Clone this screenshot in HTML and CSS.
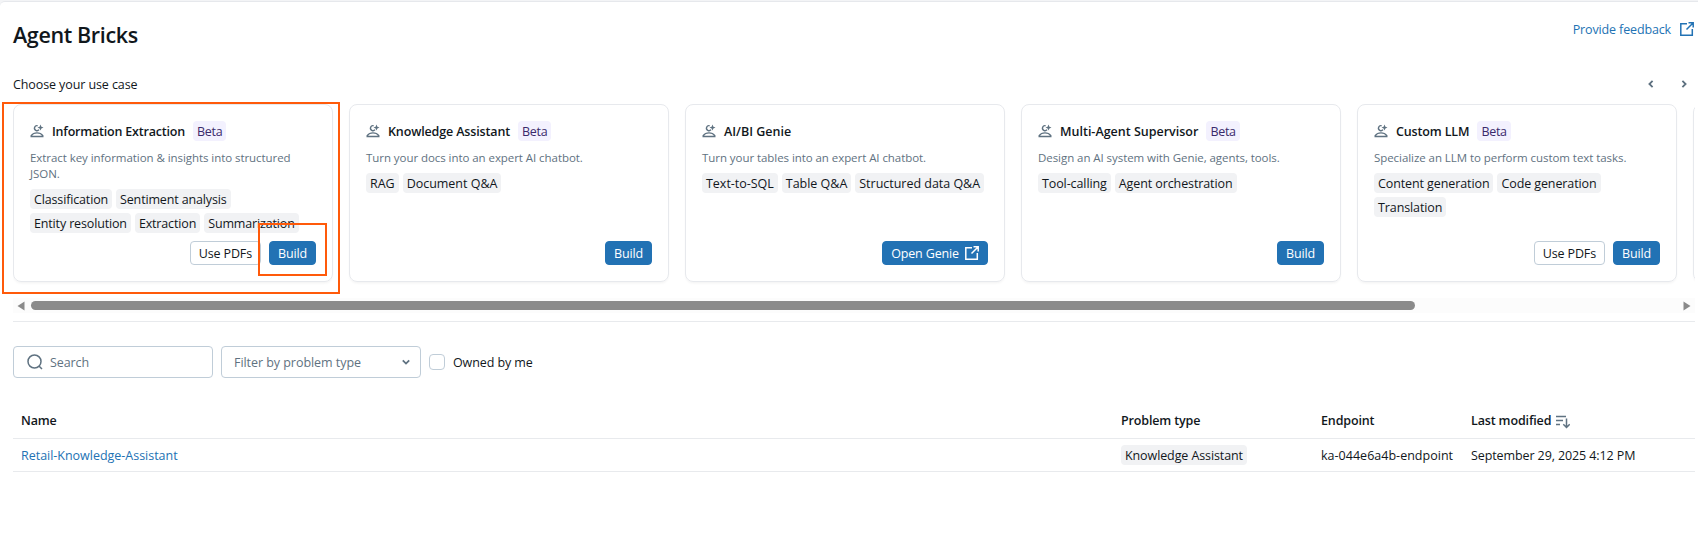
FILE: index.html
```html
<!DOCTYPE html>
<html lang="en">
<head>
<meta charset="utf-8">
<title>Agent Bricks</title>
<link rel="stylesheet" href="styles.css">
</head>
<body>
<svg width="0" height="0" class="defs">
  <symbol id="agent" viewBox="0 0 14 14">
    <path d="M7.600 1.700A2.500 2.500 0 1 0 9 5.600" fill="none" stroke="currentColor" stroke-width="1.400"/>
    <path d="M10.500.6l.9 2.100 2.100.9-2.100.9-.9 2.100-.9-2.100-2.100-.9 2.100-.9z" fill="currentColor"/>
    <path d="M1.200 12.500v-.9C2.600 9.700 4.600 8.900 7 8.900s4.400.8 5.800 2.700v.9z" fill="none" stroke="currentColor" stroke-width="1.400"/>
  </symbol>
  <symbol id="external" viewBox="0 0 14 14">
    <path d="M7 1.700H.8v11.500h11.500V7M8.500.8h4.700v4.700M13 1L6.500 7.500" fill="none" stroke="currentColor" stroke-width="1.500"/>
  </symbol>
  <symbol id="chevron" viewBox="0 0 8 8">
    <path d="M.8 2.400L4 5.600l3.200-3.200" fill="none" stroke="currentColor" stroke-width="1.800"/>
  </symbol>
</svg>
<main class="page">
  <header class="header">
    <h1 class="title">Agent Bricks</h1>
    <a class="feedback"><span>Provide feedback</span><svg class="ext"><use href="#external"/></svg></a>
  </header>

  <div class="choose">
    <span>Choose your use case</span>
    <div class="pager">
      <svg class="chev prev"><use href="#chevron"/></svg>
      <svg class="chev next"><use href="#chevron"/></svg>
    </div>
  </div>

  <section class="cards">
    <article class="card">
      <div class="card-head"><svg class="agent"><use href="#agent"/></svg><h2 class="tight">Information Extraction</h2><span class="beta">Beta</span></div>
      <p class="desc">Extract key information &amp; insights into structured JSON.</p>
      <div class="tags snug"><span class="tag">Classification</span><span class="tag">Sentiment analysis</span><span class="tag">Entity resolution</span><span class="tag">Extraction</span><span class="tag">Summarization</span></div>
      <div class="actions"><button class="btn">Use PDFs</button><button class="btn primary">Build</button></div>
    </article>
    <article class="card">
      <div class="card-head"><svg class="agent"><use href="#agent"/></svg><h2>Knowledge Assistant</h2><span class="beta">Beta</span></div>
      <p class="desc">Turn your docs into an expert AI chatbot.</p>
      <div class="tags roomy"><span class="tag">RAG</span><span class="tag">Document Q&amp;A</span></div>
      <div class="actions"><button class="btn primary">Build</button></div>
    </article>
    <article class="card">
      <div class="card-head"><svg class="agent"><use href="#agent"/></svg><h2 class="wide">AI/BI Genie</h2></div>
      <p class="desc">Turn your tables into an expert AI chatbot.</p>
      <div class="tags roomy"><span class="tag">Text-to-SQL</span><span class="tag">Table Q&amp;A</span><span class="tag">Structured data Q&amp;A</span></div>
      <div class="actions"><button class="btn primary">Open Genie<svg class="ext"><use href="#external"/></svg></button></div>
    </article>
    <article class="card">
      <div class="card-head"><svg class="agent"><use href="#agent"/></svg><h2 class="wide">Multi-Agent Supervisor</h2><span class="beta">Beta</span></div>
      <p class="desc">Design an AI system with Genie, agents, tools.</p>
      <div class="tags"><span class="tag">Tool-calling</span><span class="tag">Agent orchestration</span></div>
      <div class="actions"><button class="btn primary">Build</button></div>
    </article>
    <article class="card">
      <div class="card-head"><svg class="agent"><use href="#agent"/></svg><h2>Custom LLM</h2><span class="beta">Beta</span></div>
      <p class="desc">Specialize an LLM to perform custom text tasks.</p>
      <div class="tags"><span class="tag">Content generation</span><span class="tag">Code generation</span><span class="tag">Translation</span></div>
      <div class="actions"><button class="btn">Use PDFs</button><button class="btn primary">Build</button></div>
    </article>
    <article class="card"></article>
  </section>

  <div class="scrollbar">
    <svg class="arrow" viewBox="0 0 8 10"><path d="M7.500.5v9L.5 5z" fill="#8a8a8a"/></svg>
    <div class="track"><div class="thumb"></div></div>
    <svg class="arrow" viewBox="0 0 8 10"><path d="M.5.5v9L7.500 5z" fill="#8a8a8a"/></svg>
  </div>

  <section class="filters">
    <div class="field search">
      <svg class="lens" viewBox="0 0 16 16"><circle cx="7.500" cy="7.500" r="6.500" fill="none" stroke="currentColor" stroke-width="1.500"/><path d="M12 12l3 3" stroke="currentColor" stroke-width="1.500"/></svg>
      <span>Search</span>
    </div>
    <div class="field select"><span>Filter by problem type</span><svg class="chev"><use href="#chevron"/></svg></div>
    <label class="owned"><span class="box"></span><span>Owned by me</span></label>
  </section>

  <section class="table">
    <div class="row head">
      <span>Name</span><span>Problem type</span><span>Endpoint</span>
      <span class="sorted">Last modified<svg class="sort" viewBox="0 0 14 14"><path d="M0 1.500h10M0 5.500h7M0 9.500h4M10.500 3.500v9M7.300 9.300l3.200 3.200 3.200-3.200" fill="none" stroke="currentColor" stroke-width="1.500"/></svg></span>
    </div>
    <div class="row">
      <a class="link cell">Retail-Knowledge-Assistant</a><span class="tag">Knowledge Assistant</span><span class="endpoint cell">ka-044e6a4b-endpoint</span><span class="cell">September 29, 2025 4:12 PM</span>
    </div>
  </section>
</main>
<div class="mark mark-card"></div>
<div class="mark mark-build"></div>
</body>
</html>
```
FILE: styles.css
```css
* { box-sizing: border-box; }
body {
  margin: 0;
  height: 539px;
  overflow: hidden;
  background: #f3f4f6;
  color: #11171c;
  font: 400 12.5px/20px "Open Sans", "Noto Sans", sans-serif;
  letter-spacing: -0.1px;
}
svg { display: block; flex: none; }
.defs { position: absolute; }
h1, h2, p { margin: 0; }
.page {
  margin: 1px -1px 0 0;
  height: 540px;
  padding: 0 4px 0 13px;
  background: #fff;
  border-top: 1px solid #e6e8ec;
  border-top-left-radius: 5px;
}
.header {
  display: flex;
  justify-content: space-between;
  height: 72px;
  padding-top: 17px;
}
.title {
  font-size: 21.5px;
  font-weight: 600;
  line-height: 32px;
  letter-spacing: -0.37px;
}
.feedback {
  display: flex;
  gap: 9px;
  color: #2272b4;
  line-height: 22px;
  letter-spacing: -0.14px;
}
.ext { width: 14px; height: 14px; }
.feedback .ext { margin: 3px 1px 0 0; }
.choose {
  display: flex;
  justify-content: space-between;
  align-items: center;
  height: 20px;
}
.choose > span { padding-top: 2px; }
.pager {
  display: flex;
  gap: 25px;
  padding-right: 7px;
  color: #5f7281;
}
.chev { width: 8px; height: 8px; }
.prev { transform: rotate(90deg); }
.next { transform: rotate(-90deg); }

.cards {
  display: flex;
  gap: 16px;
  height: 204px;
  padding-top: 10px;
  overflow: hidden;
}
.card {
  display: flex;
  flex-direction: column;
  flex: none;
  width: 320px;
  height: 178px;
  padding: 16px;
  border: 1px solid #e7e9ed;
  border-radius: 8px;
  box-shadow: 0 2px 3px -1px rgba(0, 0, 0, .06);
}
.card-head { display: flex; align-items: center; height: 20px; }
.agent {
  width: 14px;
  height: 14px;
  margin-right: 8px;
  color: #5f7281;
}
h2 {
  height: 20px;
  font-size: 12.5px;
  line-height: 22px;
  font-weight: 600;
  letter-spacing: -0.14px;
}
.tight { letter-spacing: -0.2px; }
.wide { letter-spacing: 0; }
.beta {
  height: 20px;
  margin-left: 8px;
  padding: 0 4px;
  border-radius: 4px;
  background: #f3f1fe;
  color: #3a2a6b;
  line-height: 22px;
  letter-spacing: -0.3px;
}
.desc {
  margin: 9px 0 7px;
  font-size: 11.5px;
  line-height: 16px;
  letter-spacing: -0.06px;
  color: #5f7281;
}
.tags { display: flex; flex-wrap: wrap; gap: 4px; }
.tag {
  justify-self: start;
  height: 20px;
  padding: 0 4px;
  border-radius: 4px;
  background: #f1f2f4;
  line-height: 22px;
}
.snug { letter-spacing: -0.15px; }
.roomy { letter-spacing: -0.02px; }
.actions {
  display: flex;
  justify-content: flex-end;
  gap: 8px;
  margin-top: auto;
}
.btn {
  display: flex;
  align-items: center;
  gap: 5px;
  height: 24px;
  padding: 2px 8px 0;
  border: 1px solid #c0cdd8;
  border-radius: 4px;
  background: #fff;
  color: #11171c;
  font: inherit;
  letter-spacing: -0.14px;
}
.btn .ext { margin: 0 0 2px 1px; }
.primary { background: #2272b4; border-color: #2272b4; color: #fff; }

.scrollbar {
  display: flex;
  align-items: center;
  height: 15px;
  padding: 0 4px;
  background: #fcfcfc;
}
.arrow { width: 8px; height: 10px; }
.track { flex: 1; margin: 0 5px 0 6px; }
.thumb { width: 1384px; height: 9px; border-radius: 5px; background: #8b8b8b; }

.filters {
  display: flex;
  gap: 8px;
  margin-top: 8px;
  padding-top: 24px;
  border-top: 1px solid #e8eaed;
}
.field {
  display: flex;
  align-items: center;
  width: 200px;
  height: 32px;
  border: 1px solid #c0cdd8;
  border-radius: 4px;
  color: #5f7281;
}
.field span, .owned span:last-child { padding-top: 2px; }
.search { gap: 7px; padding-left: 13px; }
.lens { width: 16px; height: 16px; }
.select { justify-content: space-between; padding: 0 10px 0 12px; letter-spacing: -0.05px; }
.owned { display: flex; align-items: center; gap: 8px; }
.box { width: 16px; height: 16px; border: 1px solid #c0cdd8; border-radius: 4px; }

.table { margin-top: 28px; }
.row {
  display: grid;
  grid-template-columns: 1100px 200px 150px 1fr;
  align-items: center;
  height: 33px;
  padding-left: 8px;
  border-bottom: 1px solid #e8eaed;
}
.head { padding-bottom: 2px; font-weight: 600; letter-spacing: -0.14px; }
.cell { padding-top: 2px; }
.sorted { display: flex; align-items: center; gap: 5px; }
.sort { width: 14px; height: 14px; margin-top: 2px; color: #5f7281; }
.link { color: #2272b4; letter-spacing: -0.02px; }
.endpoint { letter-spacing: 0.02px; }

.mark { position: absolute; border: 2px solid #ff5a0a; }
.mark-card { left: 2px; top: 102px; width: 338px; height: 192px; }
.mark-build { left: 258px; top: 223px; width: 69px; height: 53px; }
```
